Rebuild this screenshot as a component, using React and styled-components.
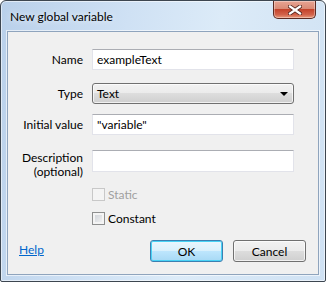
import React from 'react'
import styled, { createGlobalStyle } from 'styled-components'

const Global = createGlobalStyle`
body {
  margin: 0;
  background: #ffffff;
  font-family: Lato, "Noto Sans", sans-serif;
  font-size: 12px;
}
`;

function App() {
  return (
    <>
      <Global />
      <Window>
        <TitleBar>
          <Title>New global variable</Title>
          <CloseButton>
            <svg width="14" height="10" viewBox="0 0 14 10">
              <path d="M2 1.5 L12 8.5 M12 1.5 L2 8.5" stroke="#5a2a22" strokeWidth="4" strokeLinecap="square" />
              <path d="M2 1.5 L12 8.5 M12 1.5 L2 8.5" stroke="#ffffff" strokeWidth="2.2" strokeLinecap="square" />
            </svg>
          </CloseButton>
        </TitleBar>
        <Client>
          <Row $mt={17} $h={21}>
            <Label>Name</Label>
            <TextBox defaultValue="exampleText" />
          </Row>
          <Row $mt={13} $h={21}>
            <Label>Type</Label>
            <ComboBox>
              <span>Text</span>
              <Arrow />
            </ComboBox>
          </Row>
          <Row $mt={10} $h={21}>
            <Label>Initial value</Label>
            <TextBox defaultValue={'"variable"'} />
          </Row>
          <Row $mt={15} $h={22} $top>
            <Label $multi>Description<br />(optional)</Label>
            <TextBox $h={22} defaultValue="" />
          </Row>
          <Row $mt={16} $h={13}>
            <span />
            <Check>
              <Box $disabled />
              <CheckText $disabled>Static</CheckText>
            </Check>
          </Row>
          <Row $mt={11} $h={13}>
            <span />
            <Check>
              <Box />
              <CheckText>Constant</CheckText>
            </Check>
          </Row>
          <Footer>
            <HelpLink href="#">Help</HelpLink>
            <Buttons>
              <Button $default>OK</Button>
              <Button>Cancel</Button>
            </Buttons>
          </Footer>
        </Client>
      </Window>
    </>
  )
}

const Window = styled.div`
width: 326px;
height: 282px;
box-sizing: border-box;
border: 1px solid #3d4650;
border-radius: 6px 6px 2px 2px;
background: linear-gradient(100deg, #b9d0ea 0%, #cfe1f4 35%, #dcebf8 60%, #cfe1f3 100%);
box-shadow: inset 0 0 0 1px rgba(255, 255, 255, 0.55);
display: flex;
flex-direction: column;
overflow: hidden;
`;

const TitleBar = styled.div`
height: 30px;
flex-shrink: 0;
display: flex;
justify-content: space-between;
align-items: flex-start;
padding-left: 9px;
padding-right: 9px;
`;

const Title = styled.div`
margin-top: 8px;
font-size: 12px;
line-height: 15px;
color: #000;
text-shadow: 0 0 6px rgba(255, 255, 255, 0.9);
`;

const CloseButton = styled.div`
width: 43px;
height: 18px;
box-sizing: border-box;
border: 1px solid #5b2a22;
border-top: none;
border-radius: 0 0 5px 5px;
background: linear-gradient(180deg, #e8a493 0%, #d98a76 45%, #c4432b 50%, #d2624a 80%, #e99a7c 100%);
box-shadow: inset 0 0 0 1px rgba(255, 255, 255, 0.35);
display: flex;
align-items: center;
justify-content: center;
`;

const Client = styled.div`
flex: 1;
margin: 0 6px 6px 6px;
border: 1px solid #8fa4bd;
background: #f0f0f0;
box-shadow: 0 0 0 1px rgba(255, 255, 255, 0.6);
display: flex;
flex-direction: column;
`;

const Row = styled.div`
display: grid;
grid-template-columns: 75px 202px;
column-gap: 9px;
height: ${p => p.$h}px;
align-items: ${p => (p.$top ? 'start' : 'center')};
margin-top: ${p => p.$mt}px;
`;

const Label = styled.div`
text-align: right;
color: #000;
line-height: 14px;
padding-top: ${p => (p.$multi ? '1px' : '0')};
`;

const TextBox = styled.input`
box-sizing: border-box;
height: ${p => p.$h || 21}px;
width: 202px;
margin: 0;
padding: 0 4px;
border: 1px solid #e2e3ea;
border-top-color: #abadb3;
background: #fff;
font-family: inherit;
font-size: 12px;
color: #000;
outline: none;
`;

const ComboBox = styled.div`
box-sizing: border-box;
height: 21px;
display: flex;
align-items: center;
justify-content: space-between;
padding: 0 5px 0 4px;
border: 1px solid #707070;
border-radius: 3px;
background: linear-gradient(180deg, #f2f2f2 0%, #ebebeb 49%, #dddddd 50%, #cfcfcf 100%);
box-shadow: inset 0 0 0 1px rgba(255, 255, 255, 0.7);
line-height: 14px;
`;

const Arrow = styled.span`
width: 0;
height: 0;
border-left: 4px solid transparent;
border-right: 4px solid transparent;
border-top: 4px solid #000;
margin-top: 1px;
`;

const Check = styled.label`
display: flex;
align-items: center;
gap: 3px;
height: 13px;
line-height: 13px;
`;

const Box = styled.span`
width: 13px;
height: 13px;
box-sizing: border-box;
border: 1px solid ${p => (p.$disabled ? '#c8c8c8' : '#8e8f8f')};
background: ${p => (p.$disabled
  ? '#f4f4f4'
  : 'linear-gradient(135deg, #cbcfd5 0%, #f6f6f6 100%)')};
box-shadow: inset 0 0 0 2px #f4f4f4;
`;

const CheckText = styled.span`
color: ${p => (p.$disabled ? '#a0a0a0' : '#000')};
`;

const Footer = styled.div`
margin-top: 15px;
height: 22px;
display: flex;
align-items: center;
justify-content: space-between;
padding: 0 12px 0 11px;
`;

const HelpLink = styled.a`
color: #0066cc;
text-decoration: underline;
line-height: 14px;
margin-top: -2px;
`;

const Buttons = styled.div`
display: flex;
gap: 10px;
`;

const Button = styled.button`
width: 73px;
height: 22px;
box-sizing: border-box;
margin: 0;
padding: 0;
font-family: inherit;
font-size: 12px;
color: #000;
border-radius: 3px;
border: 1px solid ${p => (p.$default ? '#3c7fb1' : '#707070')};
background: ${p => (p.$default
  ? 'linear-gradient(180deg, #eaf6fd 0%, #d9f0fc 49%, #bee6fd 50%, #a7d9f5 100%)'
  : 'linear-gradient(180deg, #f2f2f2 0%, #ebebeb 49%, #dddddd 50%, #cfcfcf 100%)')};
box-shadow: inset 0 0 0 1px ${p => (p.$default ? '#48d2f5' : 'rgba(255, 255, 255, 0.7)')};
`;

export default App
